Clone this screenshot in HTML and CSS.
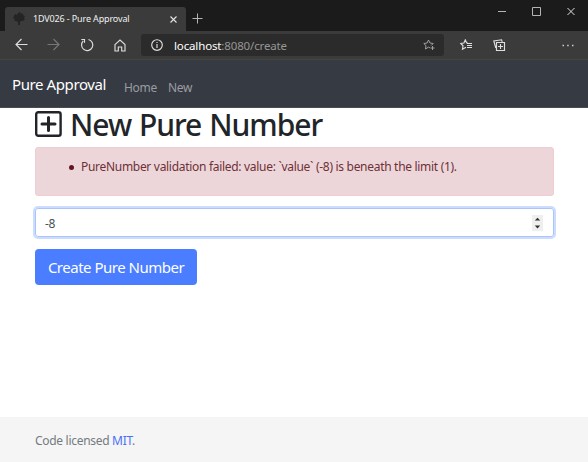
FILE: index.html
```html
<!DOCTYPE html>
<html lang="en">
<head>
<meta charset="utf-8">
<title>1DV026 - Pure Approval</title>
<link rel="stylesheet" href="styles.css">
</head>
<body>
<div class="titlebar">
  <div class="tab">
    <svg class="favicon" width="12" height="14" viewBox="0 0 12 14"><path fill="#242424" d="M5 1l2-1 1 2 2-1v2l2 1-1 2 1 1-2 2H8l-1 1v3H5v-3L3 9 1 9 2 7 0 6l1-2 1-2 2 1z"/></svg>
    <span class="tab-title">1DV026 - Pure Approval</span>
    <svg class="tab-close" width="7" height="7" viewBox="0 0 7 7"><path d="M.5.5l6 6m0-6l-6 6" stroke="#e4e4e4" stroke-width="1.1"/></svg>
  </div>
  <svg class="new-tab" width="11" height="11" viewBox="0 0 11 11"><path d="M5.5.5v10M.5 5.5h10" stroke="#b5b5b5"/></svg>
  <div class="window-controls">
    <svg width="8" height="9" viewBox="0 0 8 9"><path d="M0 4.5h8" stroke="#b5b5b5"/></svg>
    <svg width="9" height="9" viewBox="0 0 9 9"><path d="M.5.5h8v8h-8z" fill="none" stroke="#b5b5b5"/></svg>
    <svg width="8" height="9" viewBox="0 0 8 9"><path d="M.5 1l7 7m0-7l-7 7" stroke="#e0e0e0"/></svg>
  </div>
</div>
<div class="toolbar">
  <svg class="back" width="14" height="14" viewBox="0 0 14 14"><path d="M12.500 6.500H1M6.500 1L1 6.500 6.500 12" class="line"/></svg>
  <svg class="forward" width="14" height="14" viewBox="0 0 14 14"><path d="M.5 6.500H12M6.500 1L12 6.500 6.500 12" class="line dim"/></svg>
  <svg class="reload" width="14" height="14" viewBox="0 0 14 14"><path d="M8.500 1.500A5.600 5.600 0 1 1 3.200 3M1.300 1.500h3.200v3.200" class="line"/></svg>
  <svg class="home" width="12" height="13" viewBox="0 0 12 13"><path d="M1 5.600L6 1l5 4.600V12H7.700V8H4.300v4H1z" class="line"/></svg>
  <div class="address">
    <svg class="info" width="12" height="12" viewBox="0 0 12 12"><circle cx="6" cy="6" r="5.300" class="line"/><path d="M6 5v4M6 3v1" class="line"/></svg>
    <span class="url"><span class="host">localhost</span>:8080/create</span>
    <svg class="star" width="12" height="12" viewBox="0 0 12 12"><path d="M7 8.900L5.500 8.100 2.500 10 3 6.700.8 4.500 4.100 4 5.500 1 7 4l3.200.5-2 2M9.500 7v4M7.500 9h4" fill="none" stroke="#a0a0a0"/></svg>
  </div>
  <svg class="favorites" width="13" height="12" viewBox="0 0 13 12"><path d="M8 4H6.700L5.300.9 3.900 4 .8 4.500 3 6.800 2.500 10.200 6 8.200M7 4.500h5M7 6.500h5M7 8.500h5" class="line"/></svg>
  <svg class="collections" width="13" height="13" viewBox="0 0 13 13"><path d="M3.500 3.500h8v8h-8zM7.500 5v5M5 7.500h5M2.800 9L.8 2 8.600.8l.6 2" class="line"/></svg>
  <svg class="more" width="12" height="3" viewBox="0 0 12 3"><path d="M.5 1.500H2M5.200 1.500h1.500M10 1.500h1.500" stroke="#cfcfcf" stroke-width="1.500"/></svg>
</div>
<nav class="navbar">
  <a class="brand">Pure Approval</a>
  <a class="nav-link home-link">Home</a>
  <a class="nav-link new-link">New</a>
</nav>
<main class="container">
  <h1 class="heading">
    <svg width="27" height="26" viewBox="0 0 27 26" fill="none" stroke="#212529"><rect x="1.200" y="1.200" width="24.400" height="23.600" rx="2" stroke-width="2.400"/><path d="M13.500 6.500v13M7 13h13" stroke-width="3" stroke-linecap="round"/></svg>
    <span class="heading-text">New Pure Number</span>
  </h1>
  <ul class="alert">
    <li><span class="alert-text">PureNumber validation failed: value: `value` (-8) is beneath the limit (1).</span></li>
  </ul>
  <div class="field">
    <span class="value">-8</span>
    <svg class="spinner" width="11" height="16" viewBox="0 0 11 16"><path fill="#efefef" d="M0 0h11v16H0z"/><path fill="#303030" d="M2.800 5.600L5.500 2.800 8.200 5.600zM2.800 10.600h5.400L5.500 13.400z"/></svg>
  </div>
  <button class="submit"><span class="submit-text">Create Pure Number</span></button>
</main>
<footer class="footer"><span class="license">Code licensed <a class="mit">MIT</a>.</span></footer>
</body>
</html>
```
FILE: styles.css
```css
* { box-sizing: border-box; }
body {
  margin: 0;
  height: 462px;
  display: flex;
  flex-direction: column;
  overflow: hidden;
  background: #fff;
  font: 12px/18px "Noto Sans", sans-serif;
  letter-spacing: -.3px;
  color: #212529;
  white-space: nowrap;
}
svg { display: block; flex: none; }
.line { fill: none; stroke: #dedede; stroke-width: 1.15; }
.dim { stroke: #777; }
.titlebar { height: 31px; flex: none; background: #1b1b1b; display: flex; }
.tab {
  width: 181px;
  height: 24px;
  margin: 7px 0 0 5px;
  padding: 0 9px 0 8px;
  border-radius: 3px 3px 0 0;
  background: #3b3b3b;
  display: flex;
  align-items: center;
  color: #f0f0f0;
  font-size: 9px;
  letter-spacing: -.14px;
}
.tab-title { margin-left: 8px; }
.tab-close { margin-left: auto; }
.new-tab { margin: 13px 0 0 6px; }
.window-controls { display: flex; gap: 26px; margin: 7px 13px 0 auto; }
.toolbar { height: 29px; flex: none; background: #3b3b3b; display: flex; align-items: center; padding: 0 14px 0 15px; border-bottom: 1px solid #45443f; }
.forward { margin-left: 18px; }
.reload { margin-left: 19px; }
.home { margin-left: 20px; }
.address {
  width: 303px;
  height: 22px;
  margin-left: 15px;
  padding: 0 9px 0 10px;
  border-radius: 3px;
  background: #2b2b2b;
  display: flex;
  align-items: center;
}
.url { margin: 2px 0 0 11px; color: #969696; font-size: 11.5px; letter-spacing: -.14px; }
.host { color: #fff; }
.star { margin-left: auto; }
.favorites { margin-left: 16px; }
.collections { margin-left: 20px; }
.more { margin-left: auto; }
.navbar { height: 48px; flex: none; background: #363a43; border-bottom: 1px solid #494d52; display: flex; align-items: flex-start; padding: 13px 12px 0; }
.brand { color: #fff; font-size: 15px; line-height: 23px; width: 112px; letter-spacing: -.4px; }
.nav-link { color: #9a9da1; margin-top: 6px; }
.home-link { width: 44px; letter-spacing: -.3px; }
.container { flex: 1; padding: 0 34px 0 35px; }
.heading { height: 39px; margin: 0; padding-top: 3px; display: flex; align-items: flex-start; font-size: 30px; line-height: 36px; font-weight: 500; letter-spacing: -1px; word-spacing: 1px; }
.heading-text { margin: -4px 0 0 8px; }
.alert { height: 49px; margin: 0; padding: 10px 12px 0 33px; border: 1px solid #efcdd2; border-radius: 3px; background: #edd6d9; color: #6e3137; list-style: none; }
.alert li { display: flex; align-items: center; gap: 7px; }
.alert li::before { content: ""; width: 5px; height: 5px; border-radius: 50%; background: #641520; }
.field { height: 29px; margin-top: 12px; padding: 2px 10px 0 9px; border: 1px solid #a9c5fb; border-radius: 3px; box-shadow: 0 0 0 2px #cbdcff; display: flex; align-items: center; justify-content: space-between; color: #495057; }
.spinner { margin-top: -2px; }
.submit { display: flex; align-items: center; justify-content: center; width: 162px; height: 36px; margin-top: 12px; padding: 0; border: 0; border-radius: 4px; background: #4a7dff; color: #fff; font: 15px/22px "Noto Sans", sans-serif; letter-spacing: -.5px; }
.footer { height: 45px; flex: none; padding: 15px 35px 0; background: #f5f5f5; color: #747b80; }
.mit { color: #4a70f5; }
```
